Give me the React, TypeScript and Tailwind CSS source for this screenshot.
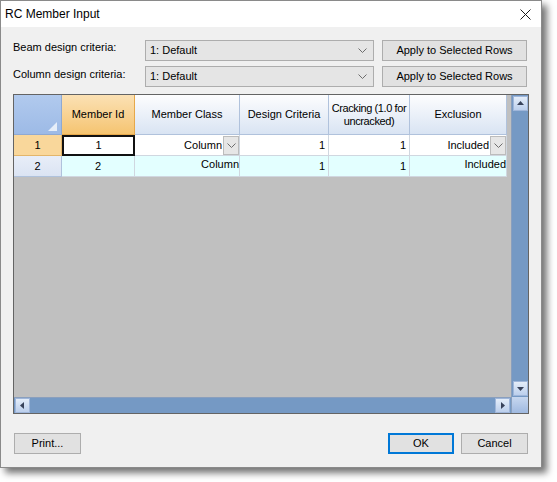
import React from "react";

const cols = "grid-cols-[48px_73px_105px_89px_81px_97px]";

function Chevron({ className = "" }: { className?: string }) {
  return (
    <svg width="9" height="5" viewBox="0 0 9 5" className={className}>
      <path d="M0.5 0.5 L4.5 4.5 L8.5 0.5" fill="none" stroke="#6d6d6d" strokeWidth="1" />
    </svg>
  );
}

function Combo({ value }: { value: string }) {
  return (
    <div className="w-[229px] h-[21px] bg-[#e5e5e5] border border-[#adadad] flex items-center justify-between pl-[4px] pr-[6px]">
      <span>{value}</span>
      <Chevron />
    </div>
  );
}

function Btn({ children, w, focus }: { children: React.ReactNode; w: string; focus?: boolean }) {
  return (
    <button
      className={`${w} h-[21px] bg-[#e1e1e1] flex items-center justify-center ${
        focus ? "border-2 border-[#0078d7]" : "border border-[#adadad]"
      }`}
    >
      {children}
    </button>
  );
}

function CellDrop() {
  return (
    <div className="w-[16px] h-[19px] bg-[#e6e6e6] border border-[#bcbcbc] flex items-center justify-center shrink-0">
      <Chevron />
    </div>
  );
}

function ScrollBtn({ dir }: { dir: "up" | "down" | "left" | "right" }) {
  const paths = {
    up: "M2 7 L5.5 3 L9 7 Z",
    down: "M2 4 L5.5 8 L9 4 Z",
    left: "M7 2 L3 5.5 L7 9 Z",
    right: "M4 2 L8 5.5 L4 9 Z",
  };
  return (
    <div className="w-[15px] h-[15px] bg-gradient-to-b from-[#e4edf9] to-[#bccfec] border border-[#9fb6da] flex items-center justify-center shrink-0">
      <svg width="11" height="11" viewBox="0 0 11 11">
        <path d={paths[dir]} fill="#38425a" />
      </svg>
    </div>
  );
}

function HeaderCell({ children }: { children: React.ReactNode }) {
  return (
    <div className="h-[40px] bg-gradient-to-b from-[#fdfdfe] to-[#d9e4f3] border-r border-b border-[#b0c2dc] flex items-center justify-center text-center leading-[13px] px-[1px]">
      {children}
    </div>
  );
}

function NumCell({ v, cyan }: { v: string; cyan?: boolean }) {
  return (
    <div
      className={`h-[21px] border-r border-b border-[#d0d7e0] flex items-center justify-end pr-[3px] ${
        cyan ? "bg-[#e3ffff]" : "bg-white"
      }`}
    >
      {v}
    </div>
  );
}

export default function App() {
  return (
    <div className="w-[557px] h-[482px] bg-white font-['Liberation_Sans',Arial,sans-serif] text-[11px] text-black">
      <div className="w-[542px] h-[468px] border border-[#8a8a8a] bg-[#f0f0f0] flex flex-col shadow-[5px_5px_7px_rgba(0,0,0,0.55)]">
        {/* title bar */}
        <div className="h-[26px] bg-white flex items-center justify-between pl-[4px] pr-[10px]">
          <span className="text-[12px]">RC Member Input</span>
          <svg width="11" height="11" viewBox="0 0 11 11">
            <path d="M0.5 0.5 L10.5 10.5 M10.5 0.5 L0.5 10.5" stroke="#1a1a1a" strokeWidth="1" />
          </svg>
        </div>

        <div className="flex flex-col pl-[12px] pt-[13px]">
          <div className="flex items-center h-[21px]">
            <span className="w-[132px] -mt-[6px]">Beam design criteria:</span>
            <Combo value="1: Default" />
            <div className="ml-[8px]">
              <Btn w="w-[145px]">Apply to Selected Rows</Btn>
            </div>
          </div>
          <div className="flex items-center h-[21px] mt-[5px]">
            <span className="w-[132px] -mt-[5px]">Column design criteria:</span>
            <Combo value="1: Default" />
            <div className="ml-[8px]">
              <Btn w="w-[145px]">Apply to Selected Rows</Btn>
            </div>
          </div>

          {/* grid */}
          <div className="mt-[7px] w-[516px] h-[320px] border border-[#646464] flex flex-col">
            <div className="flex h-[302px]">
              <div className="flex-1 bg-[#c0c0c0]">
                <div className={`grid ${cols}`}>
                  <div className="h-[40px] bg-gradient-to-b from-[#b1caee] to-[#9dbae6] border-r border-b border-[#8fa9d2] relative">
                    <svg width="9" height="9" viewBox="0 0 9 9" className="absolute right-[4px] bottom-[3px]">
                      <path d="M9 0 L9 9 L0 9 Z" fill="#e6eef9" />
                    </svg>
                  </div>
                  <div className="h-[40px] bg-gradient-to-b from-[#fbe1b4] to-[#f5c470] border-r border-b border-[#e6a84a] flex items-center justify-center">
                    Member Id
                  </div>
                  <HeaderCell>Member Class</HeaderCell>
                  <HeaderCell>Design Criteria</HeaderCell>
                  <HeaderCell>
                    <span className="whitespace-nowrap tracking-[-0.4px]">
                      Cracking (1.0 for
                      <br />
                      uncracked)
                    </span>
                  </HeaderCell>
                  <HeaderCell>Exclusion</HeaderCell>

                  {/* row 1 */}
                  <div className="h-[21px] bg-[#f9d79b] border-r border-b border-[#e3b56a] flex items-center justify-center">
                    1
                  </div>
                  <div className="h-[21px] bg-white border-2 border-[#111] flex items-center justify-center">1</div>
                  <div className="h-[21px] bg-white border-r border-b border-[#d0d7e0] flex items-center justify-end">
                    <span className="pr-[1px]">Column</span>
                    <CellDrop />
                  </div>
                  <NumCell v="1" />
                  <NumCell v="1" />
                  <div className="h-[21px] bg-white border-r border-b border-[#d0d7e0] flex items-center justify-end">
                    <span className="pr-[1px]">Included</span>
                    <CellDrop />
                  </div>

                  {/* row 2 */}
                  <div className="h-[21px] bg-gradient-to-b from-[#e8eef8] to-[#dbe4f3] border-r border-b border-[#b0c2dc] flex items-center justify-center">
                    2
                  </div>
                  <div className="h-[21px] bg-[#e3ffff] border-r border-b border-[#d0d7e0] flex items-center justify-center">
                    2
                  </div>
                  <div className="h-[21px] bg-[#e3ffff] border-r border-b border-[#d0d7e0] flex items-center justify-end">
                    <span className="-mt-[4px]">Column</span>
                  </div>
                  <NumCell v="1" cyan />
                  <NumCell v="1" cyan />
                  <div className="h-[21px] bg-[#e3ffff] border-r border-b border-[#d0d7e0] flex items-center justify-end">
                    <span className="-mt-[4px]">Included</span>
                  </div>
                </div>
              </div>
              <div className="w-[17px] bg-[#7599c4] border-l border-[#8a9fbd] flex flex-col justify-between items-center py-[1px]">
                <ScrollBtn dir="up" />
                <ScrollBtn dir="down" />
              </div>
            </div>
            <div className="flex flex-1">
              <div className="flex-1 bg-[#7599c4] flex items-center justify-between px-[1px] border-t border-[#8a9fbd]">
                <ScrollBtn dir="left" />
                <ScrollBtn dir="right" />
              </div>
              <div className="w-[17px] bg-gradient-to-b from-[#c7d7ef] to-[#9fb9e0] border-l border-[#8a9fbd]" />
            </div>
          </div>

          <div className="flex items-center mt-[19px] pr-[13px]">
            <div className="ml-[1px]">
              <Btn w="w-[67px]">Print...</Btn>
            </div>
            <div className="ml-auto flex gap-[7px]">
              <Btn w="w-[66px]" focus>
                OK
              </Btn>
              <Btn w="w-[67px]">Cancel</Btn>
            </div>
          </div>
        </div>
      </div>
    </div>
  );
}
